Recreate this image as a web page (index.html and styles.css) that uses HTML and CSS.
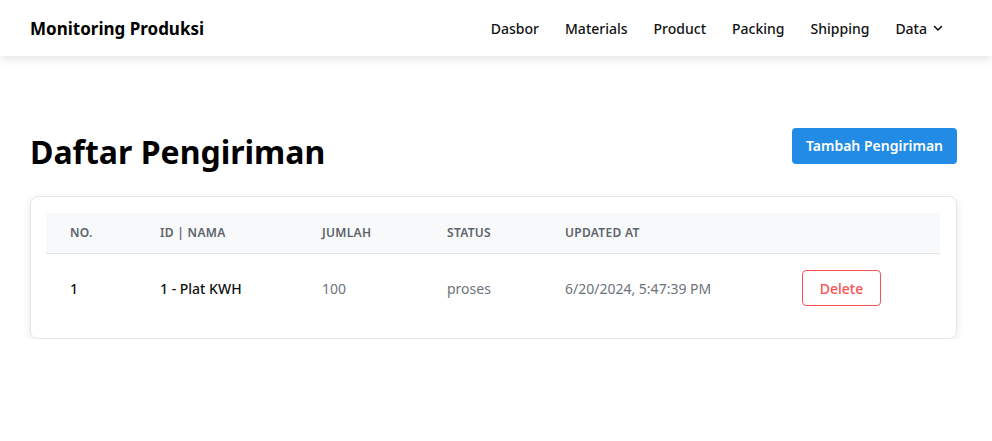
FILE: index.html
```html
<!DOCTYPE html>
<html lang="id">
<head>
<meta charset="utf-8">
<title>Monitoring Produksi</title>
<link rel="stylesheet" href="styles.css">
</head>
<body>
<header class="navbar">
  <div class="brand">Monitoring Produksi</div>
  <nav class="nav">
    <a class="nav-link">Dasbor</a>
    <a class="nav-link">Materials</a>
    <a class="nav-link">Product</a>
    <a class="nav-link">Packing</a>
    <a class="nav-link">Shipping</a>
    <a class="nav-link nav-drop">Data
      <svg class="chev" width="12" height="12" viewBox="0 0 12 12"><path d="M2.5 4.5 L6 8 L9.5 4.5" fill="none" stroke="#111" stroke-width="1.6" stroke-linecap="round" stroke-linejoin="round"/></svg>
    </a>
  </nav>
</header>
<main class="main">
  <div class="page-head">
    <h1 class="title">Daftar Pengiriman</h1>
    <button class="btn-primary">Tambah Pengiriman</button>
  </div>
  <section class="card">
    <table class="table">
      <colgroup>
        <col class="c1"><col class="c2"><col class="c3"><col class="c4"><col class="c5"><col class="c6">
      </colgroup>
      <thead>
        <tr><th>No.</th><th>ID | Nama</th><th>Jumlah</th><th>Status</th><th>Updated At</th><th></th></tr>
      </thead>
      <tbody>
        <tr>
          <td class="strong">1</td>
          <td class="strong">1 - Plat KWH</td>
          <td class="muted">100</td>
          <td class="muted">proses</td>
          <td class="muted">6/20/2024, 5:47:39 PM</td>
          <td><button class="btn-danger">Delete</button></td>
        </tr>
      </tbody>
    </table>
  </section>
</main>
</body>
</html>
```
FILE: styles.css
```css
* { box-sizing: border-box; }
body {
  margin: 0;
  font-family: "Noto Sans", "Open Sans", sans-serif;
  color: #111;
  background: #fff;
}
.navbar {
  height: 56px;
  display: flex;
  align-items: center;
  justify-content: space-between;
  padding: 0 48px 0 30px;
  background: #fff;
  box-shadow: 0 2px 10px rgba(0,0,0,0.12);
  position: relative;
}
.brand {
  font-size: 17px;
  font-weight: 700;
  color: #000;
}
.nav {
  display: flex;
  align-items: center;
  gap: 26px;
}
.nav-link {
  font-size: 14px;
  font-weight: 500;
  color: #111;
}
.nav-drop { display: flex; align-items: center; gap: 5px; }
.chev { display: block; }
.main {
  padding: 62px 35px 0 30px;
}
.page-head {
  display: flex;
  justify-content: space-between;
  align-items: center;
  margin-bottom: 23px;
}
.title {
  margin: 0;
  font-size: 32px;
  font-weight: 700;
  color: #000;
  padding-top: 12px;
}
.btn-primary {
  height: 36px;
  padding: 0 14px;
  border: none;
  border-radius: 4px;
  background: #228be6;
  color: #fff;
  font-family: inherit;
  font-size: 14px;
  font-weight: 600;
}
.card {
  border: 1px solid #e3e5e8;
  border-radius: 8px;
  padding: 16px 16px 16px 15px;
  box-shadow: 0 2px 8px rgba(0,0,0,0.09);
}
.table {
  width: 100%;
  border-collapse: collapse;
  table-layout: fixed;
}
.c1 { width: 90px; }
.c2 { width: 162px; }
.c3 { width: 125px; }
.c4 { width: 118px; }
.c5 { width: 237px; }
.table th {
  background: #f8f9fa;
  height: 40px;
  text-align: left;
  padding: 0 0 0 24px;
  font-size: 12px;
  font-weight: 600;
  color: #5c636a;
  text-transform: uppercase;
  letter-spacing: 0.3px;
  border-bottom: 1px solid #e3e5e8;
}
.table td {
  height: 69px;
  padding: 1px 0 0 24px;
  font-size: 14px;
}
.strong { color: #111; font-weight: 500; }
.muted { color: #6c737a; }
.btn-danger {
  height: 36px;
  width: 79px;
  border: 1px solid #fa5252;
  border-radius: 4px;
  background: #fff;
  color: #fa5252;
  font-family: inherit;
  font-size: 14px;
  font-weight: 500;
}
```
